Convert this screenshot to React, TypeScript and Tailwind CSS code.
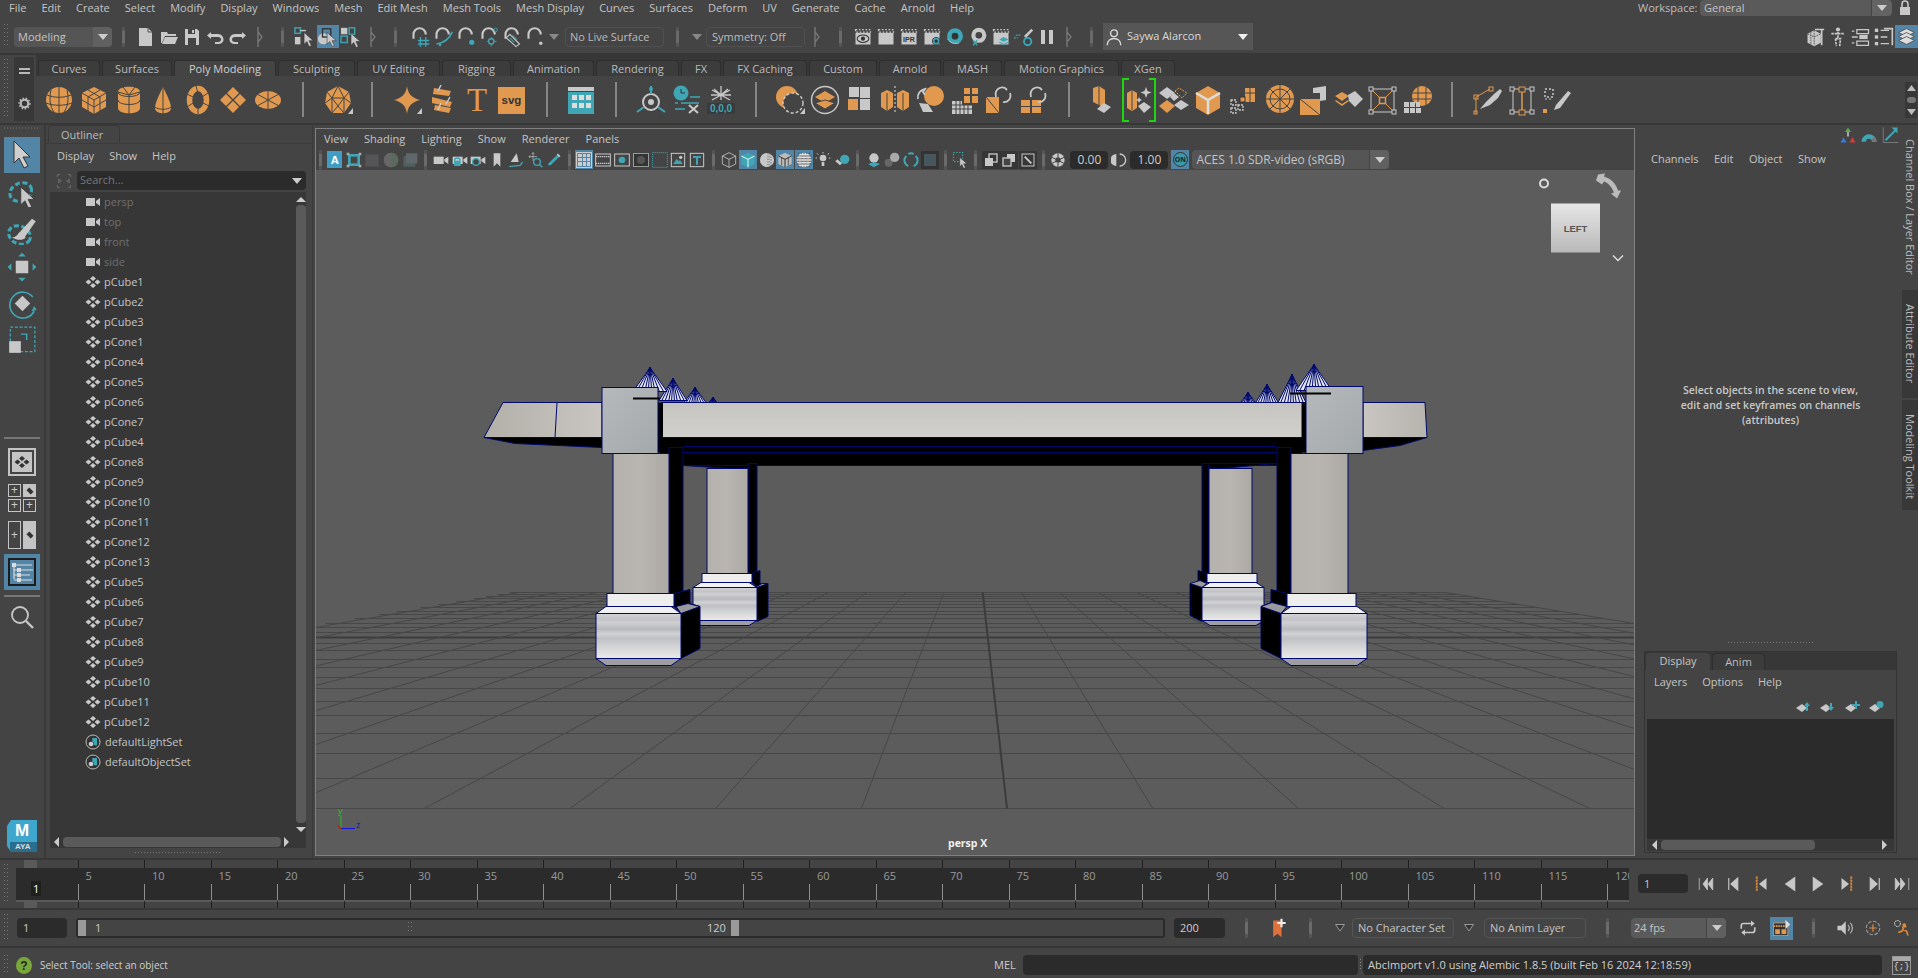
import React from "react";

const O = "#e0994f";
const G = "#c8c8c8";
const T = "#3fa6b6";
const N = "#00096b";

type P = { w?: number; h?: number; vb?: string; children?: React.ReactNode };
const Svg = ({ w = 20, h = 20, vb = "0 0 24 24", children }: P) => (
  <svg width={w} height={h} viewBox={vb} className="block shrink-0">
    {children}
  </svg>
);
const Cur = ({ x = 0, y = 0, s = 1, f = G }: { x?: number; y?: number; s?: number; f?: string }) => (
  <path transform={`translate(${x} ${y}) scale(${s})`} d="M0 0v13l3-3 2.6 5.5 2.4-1.1L5.4 9H10z" fill={f} stroke="#333" strokeWidth=".6" />
);

const Slot = ({ w, children }: { w: string; children?: React.ReactNode }) => (
  <div className={`${w} h-full flex items-center justify-center shrink-0`}>{children}</div>
);
const Step23 = ({ children }: { children?: React.ReactNode }) => <div className="w-[23px] h-full flex items-center justify-center shrink-0">{children}</div>;
const Step19 = ({ children }: { children?: React.ReactNode }) => <div className="w-[18.8px] h-full flex items-center justify-center shrink-0">{children}</div>;
const Bar = () => <div className="w-[3px] h-[20px] bg-[#6a6a6a] rounded-[1px] border-y-[4px] border-y-[#555]" />;
const Fold = () => (
  <svg width="6" height="20" viewBox="0 0 6 20" className="block">
    <path d="M1 0v20M1 5l4 5-4 5" fill="none" stroke="#777" strokeWidth="1.4" />
  </svg>
);
const Dots = ({ h = 26 }: { h?: number }) => (
  <svg width="5" height={h} className="block shrink-0">
    {Array.from({ length: Math.floor(h / 4) }).map((_, i) => (
      <g key={i}>
        <rect x="0" y={i * 4} width="1" height="1" fill="#777" />
        <rect x="3" y={i * 4} width="1" height="1" fill="#777" />
      </g>
    ))}
  </svg>
);
const TriDown = ({ c = "#ccc", s = 8 }: { c?: string; s?: number }) => (
  <svg width={s + 2} height={s} viewBox="0 0 10 8" className="block">
    <path d="M0 1h10L5 7z" fill={c} />
  </svg>
);
const TriOut = () => (
  <svg width="10" height="8" viewBox="0 0 10 8" className="block">
    <path d="M.5.5h9L5 7z" fill="#333" stroke="#999" />
  </svg>
);

/* ---------- status line icons ---------- */
const statusA = [
  <Svg w={15} h={20} vb="0 0 15 20"><path d="M1 1h9l4 4v14H1z" fill={G} /><path d="M10 1v4h4" fill="none" stroke="#555" /></Svg>,
  <Svg w={18} h={16} vb="0 0 18 16"><path d="M1 3h6l1 2h8v2H5L2 14H1z" fill={G} /><path d="M5 8h13l-3 7H2z" fill={G} /></Svg>,
  <Svg w={16} h={18} vb="0 0 16 18"><path d="M1 1h12l2 2v14H1z" fill={G} /><path d="M4 1h7v5H4zM4 10h8v7H4z" fill="#444" /><rect x="8" y="2" width="2" height="3" fill={G} /></Svg>,
  <Svg w={18} h={14} vb="0 0 18 14"><path d="M5 2 1 5.5 5 9V7h7c2 0 3 1 3 2.5S14 12 12 12H9v2h3c3.5 0 5.5-2 5.5-4.5S15.500 4 12 4H5z" fill={G} /></Svg>,
  <Svg w={18} h={14} vb="0 0 18 14"><path d="M13 2l4 3.500L13 9V7H6c-2 0-3 1-3 2.500S4 12 6 12h3v2H6C2.500 14 .5 12 .5 9.500S2.500 4 6 4h7z" fill={G} /></Svg>,
];
const selHier = (
  <Svg w={22} h={22}><rect x="1" y="2" width="6" height="6" fill="none" stroke={T} strokeWidth="1.5" /><rect x="1" y="12" width="6" height="8" fill={G} /><path d="M7 5h6" stroke={G} strokeWidth="1.5" /><Cur x={11} y={7} s={1} /></Svg>
);
const selObj = (
  <Svg w={22} h={22}><circle cx="7" cy="14" r="6" fill={G} /><rect x="6" y="3" width="9" height="9" fill="none" stroke="#333" strokeWidth="1.500" /><Cur x={11} y={7} /></Svg>
);
const selComp = (
  <Svg w={22} h={22}><rect x="1" y="2" width="7" height="7" fill={G} /><rect x="10" y="2" width="6" height="7" fill="none" stroke={T} strokeWidth="1.5" /><rect x="1" y="11" width="7" height="7" fill="none" stroke={T} strokeWidth="1.5" /><Cur x={12} y={8} /></Svg>
);
const Magnet = ({ children }: { children?: React.ReactNode }) => (
  <Svg w={21} h={22}>
    <path d="M4 14V9a7 7 0 0 1 14 0" fill="none" stroke={G} strokeWidth="2.400" />
    {children}
  </Svg>
);
const snaps = [
  <Magnet><path d="M9 16h13M9 20h13M12 12v11M18 12v11" stroke={T} strokeWidth="1.5" /></Magnet>,
  <Magnet><path d="M4 20c6-1 14-3 18-14" fill="none" stroke={T} strokeWidth="2" /><circle cx="8" cy="21" r="1.500" fill={T} /></Magnet>,
  <Magnet><circle cx="18" cy="18" r="3" fill={T} /></Magnet>,
  <Magnet><circle cx="19" cy="4" r="2" fill="none" stroke={T} /><circle cx="14" cy="17" r="3" fill="none" stroke={T} strokeWidth="1.5" /><path d="M14 12v2M14 20v3M9 17h2M17 17h3" stroke={T} /></Magnet>,
  <Magnet><path d="M9 9l11 11-4 3L5 13z" fill="none" stroke={G} strokeWidth="1.300" /><path d="M9 13l5 5M12 10l5 5" stroke={T} strokeWidth="1.200" /></Magnet>,
  <Magnet><circle cx="18" cy="19" r="2" fill={G} /></Magnet>,
];
const Clap = ({ children }: { children?: React.ReactNode }) => (
  <Svg w={20} h={22}>
    <path d="M3 3h18v3H3z" fill="none" stroke={G} strokeDasharray="2 2" strokeWidth="1.500" />
    <rect x="3" y="7" width="18" height="14" fill={G} />
    {children}
  </Svg>
);
const renders = [
  <Clap><ellipse cx="12" cy="14" rx="7" ry="4.500" fill="none" stroke="#333" strokeWidth="1.300" /><circle cx="12" cy="14" r="2.500" fill="#333" /></Clap>,
  <Clap />,
  <Clap><text x="12" y="18" fontSize="8.500" fontWeight="700" textAnchor="middle" fontFamily="Liberation Sans, sans-serif" fill="#333">IPR</text></Clap>,
  <Clap><circle cx="17" cy="17" r="5" fill="#333" /><circle cx="17" cy="17" r="3" fill="none" stroke={T} strokeWidth="2" /></Clap>,
  <Svg w={20} h={22}><circle cx="12" cy="11" r="9.500" fill={T} /><circle cx="12" cy="11" r="4" fill="#333" /><path d="M3 14c3 5 9 7 14 5" stroke={G} fill="none" /></Svg>,
  <Svg w={20} h={22}><circle cx="13" cy="10" r="9" fill={G} /><circle cx="13" cy="10" r="4" fill="#444" /><path d="M6 16l5 6M11 16l-5 6" stroke={T} strokeWidth="1.800" /></Svg>,
  <Clap><path d="M10 15l5-3 6 3-6 3z" fill={T} /><path d="M10 18l5 3 6-3" fill="none" stroke={T} strokeWidth="1.500" /></Clap>,
  <Svg w={22} h={22}><path d="M12 11 20 3l2 2-8 8z" fill={G} /><path d="M3 10h6M1 13h4" stroke={T} strokeDasharray="2 1" strokeWidth="1.500" /><circle cx="16" cy="17" r="4" fill="none" stroke={T} strokeWidth="2" /></Svg>,
  <Svg w={16} h={18} vb="0 0 16 18"><rect x="2" y="2" width="4" height="14" fill={G} /><rect x="10" y="2" width="4" height="14" fill={G} /></Svg>,
];
const right = [
  <Svg w={20} h={22}><path d="M3 8l8-4 8 4v11l-8 4-8-4z" fill={G} /><path d="M11 4v18M3 8l8 4 8-4M7 6v16" stroke="#444" strokeDasharray="2 1" fill="none" /><path d="M12 3h11M20 3v19" stroke={G} strokeWidth="2" fill="none" /></Svg>,
  <Svg w={20} h={22}><circle cx="12" cy="3" r="2.500" fill={G} /><path d="M4 8h16M12 6v9M9 14h6l-1 9M9 14l1 9" stroke={G} strokeWidth="2" fill="none" strokeDasharray="3 1" /></Svg>,
  <Svg w={20} h={20}><path d="M7 3h14v5H7zM7 17h14v5H7z" fill="none" stroke={G} strokeWidth="1.500" /><path d="M1 5h3M1 12h7M1 19h3" stroke={G} strokeWidth="1.600" /><rect x="10" y="9.500" width="10" height="5" fill={G} /></Svg>,
  <Svg w={20} h={20}><rect x="1" y="2" width="4" height="4" fill={G} /><rect x="1" y="10" width="4" height="4" fill={G} /><rect x="1" y="18" width="4" height="4" fill={G} /><path d="M8 4h10M8 12h8M8 20h10" stroke={G} strokeWidth="1.600" /><path d="M12 2h10v20" stroke={G} strokeWidth="2" fill="none" /></Svg>,
];

/* ---------- shelf icons ---------- */
const L = "#444444";
const Sh = ({ children, vb = "0 0 30 30" }: { children?: React.ReactNode; vb?: string }) => (
  <svg width="30" height="30" viewBox={vb} className="block overflow-visible">{children}</svg>
);
const Corner = () => <path d="M25 29h5v-6z" fill={G} />;
const shelf: (React.ReactNode | null)[] = [
  <Sh><circle cx="15" cy="15" r="13" fill={O} /><path d="M3 10c7 3 17 3 24 0M2 18c8 3 18 3 26 0M15 2v26M7 5c-2 8-1 17 3 22M23 5c2 8 1 17-3 22" stroke={L} fill="none" /></Sh>,
  <Sh><path d="M15 2l12 6v14l-12 7-12-7V8z" fill={O} /><path d="M3 8l12 7 12-7M15 15v14M9 5l12 7M21 5 9 12M9 12v14M21 12v14M3 15l12 7 12-7" stroke={L} fill="none" /></Sh>,
  <Sh><path d="M4 7c0-7 22-7 22 0v16c0 7-22 7-22 0z" fill={O} /><path d="M4 7c0 6 22 6 22 0M4 15c0 6 22 6 22 0M15 10v19M9 2l6 8 6-8M4 7l11 3 11-3" stroke={L} fill="none" /></Sh>,
  <Sh><path d="M15 2c-4 8-8 16-8 21 0 7 16 7 16 0 0-5-4-13-8-21z" fill={O} /><path d="M15 2v27M7 22c3 3 13 3 16 0" stroke={L} fill="none" /></Sh>,
  <Sh><ellipse cx="15" cy="15" rx="8.500" ry="11.500" fill="none" stroke={O} strokeWidth="5.500" /><path d="M4 9l6 3M13 1l2 7M25 8l-6 4M26 21l-6-3M15 29v-6M4 22l6-4" stroke={L} /></Sh>,
  <Sh><path d="M15 2l13 13-13 13L2 15z" fill={O} /><path d="M8 8l14 14M22 8 8 22" stroke={L} strokeWidth="1.300" /></Sh>,
  <Sh><ellipse cx="15" cy="15" rx="13" ry="9" fill={O} /><path d="M15 15V6M15 15V24M15 15 4 9M15 15l11-6M15 15 4 21M15 15l11 6" stroke={L} /></Sh>,
  null,
  <Sh><path d="M15 1l11 6 2 11-7 10H9L2 18 4 7z" fill={O} /><path d="M15 1l-6 12h12zM4 7l5 6-7 5M26 7l-5 6 7 5M9 13l-0 15M21 13v15M9 28l6-7 6 7M9 13l6 8 6-8" fill="none" stroke={L} /><Corner /></Sh>,
  null,
  <Sh><path d="M15 1c1 8 5 12 13 14-8 2-12 6-13 14-1-8-5-12-13-14 8-2 12-6 13-14z" fill={O} /><Corner /></Sh>,
  <Sh><path d="M7 3 24 6l-2 5L6 9zM5 12l20 5-2 5L5 18zM8 20l16 3-2 5-15-3z" fill={O} /><path d="M14 0l-3 6M23 12l-4 7M14 18l-3 7" stroke={G} strokeWidth="1.500" /></Sh>,
  <Sh><text x="15" y="26" fontSize="33" fontFamily="Liberation Serif, serif" textAnchor="middle" fill={O}>T</text></Sh>,
  <Sh><rect x="1" y="2" width="27" height="27" fill={O} /><text x="14.500" y="19" fontSize="11.500" fontWeight="700" fontFamily="Liberation Sans, sans-serif" textAnchor="middle" fill="#333">svg</text></Sh>,
  null,
  <Sh><rect x="2" y="2" width="26" height="4" fill={G} /><rect x="2" y="7" width="26" height="22" fill={T} /><path d="M6 10h5v5H6zM13 10h5v5h-5zM20 10h5v5h-5zM6 18h5v5H6zM13 18h5v5h-5zM20 18h5v5h-5z" fill="#ddd" /></Sh>,
  null,
  <Sh><circle cx="15" cy="17" r="8" fill="none" stroke={G} strokeWidth="2" /><circle cx="15" cy="17" r="3" fill={G} /><path d="M15 1v8M1 27l7-5M29 27l-7-5" stroke={T} strokeWidth="2" /><circle cx="15" cy="4" r="2" fill={T} /></Sh>,
  <Sh><circle cx="10" cy="8" r="7.500" fill={T} /><path d="M10 4v4h4" stroke="#333" fill="none" /><path d="M19 12h10M4 18h3M10 18h18M4 24h10" stroke={T} strokeWidth="1.600" /><path d="M18 20l9 8M27 20l-9 8" stroke={G} strokeWidth="2" /></Sh>,
  <Sh><path d="M15 1v14M8 4l7 6 7-6M5 10h20M6 5l18 10M24 5 6 15" stroke={G} strokeWidth="1.300" fill="none" /><rect x="1" y="18" width="28" height="11" fill="#3a3a3a" /><text x="15" y="27" fontSize="10" fontWeight="700" fontFamily="Liberation Sans, sans-serif" textAnchor="middle" fill={T}>0,0,0</text></Sh>,
  null,
  <Sh><circle cx="12" cy="12" r="11" fill={O} /><circle cx="18" cy="18" r="10" fill={L} stroke="#ccc" strokeWidth="1.400" strokeDasharray="3 2" /><Corner /></Sh>,
  <Sh><circle cx="15" cy="15" r="13.500" fill="none" stroke={G} strokeWidth="1.400" /><path d="M5 12l10-6 10 6-10 6z" fill={O} /><path d="M5 18l10 6 10-6-10-3z" fill={O} stroke="#444" /></Sh>,
  <Sh><rect x="3" y="14" width="10" height="11" fill={O} /><rect x="15" y="2" width="10" height="11" fill={G} /><rect x="15" y="14" width="10" height="11" fill={G} /><rect x="4" y="2" width="10" height="10" fill={G} /></Sh>,
  <Sh><path d="M1 8l6-3 6 3v14l-6 4-6-4z" fill={O} /><path d="M17 8l6-3 6 3v14l-6 4-6-4z" fill={O} /><path d="M7 8v18M23 8v18" stroke={L} /><path d="M15 1v28" stroke="#ddd" strokeDasharray="2 2" /></Sh>,
  <Sh><circle cx="19" cy="11" r="10" fill={O} /><path d="M3 14c-1-5 2-9 7-10l-2 3 2 3" fill="none" stroke={G} strokeWidth="1.800" /><path d="M4 18l9 1 5 8H8z" fill={G} /></Sh>,
  <Sh><path d="M14 3h6v6h-6zM22 3h6v6h-6zM14 11h6v7h-6zM22 11h6v7h-6z" fill={O} /><path d="M2 16h10v13H2zM12 20h10v9H12z" fill={G} /><path d="M2 20h20M2 24h20M6 16v13M10 16v13M14 20v9M18 20v9" stroke={L} /></Sh>,
  <Sh><path d="M2 12l13 0v16H2zM15 4h9" fill={O} /><path d="M2 12l13 16" stroke={L} /><path d="M12 12c-2-8 5-11 9-9l2 2M26 8c2 6-3 10-7 9" fill="none" stroke={G} strokeWidth="1.800" /></Sh>,
  <Sh><path d="M2 15h9v6H2zM13 15h9v6h-9zM2 22h9v6H2zM13 22h9v6h-9z" fill={O} /><path d="M12 12c-2-8 5-11 9-9l2 2M26 8c2 6-3 10-7 9" fill="none" stroke={G} strokeWidth="1.800" /></Sh>,
  null,
  <Sh><path d="M4 3l6-2 6 4v18l-6-3-6-3z" fill={O} /><path d="M10 1v19" stroke={L} /><path d="M8 24l7-6 7 4-7 6z" fill={G} /></Sh>,
  <div className="w-[34px] h-[44px] border-x-2 border-[#21d411] relative flex items-center justify-center">
    <div className="absolute left-0 top-0 w-[5px] h-[2px] bg-[#21d411]" />
    <div className="absolute right-0 top-0 w-[5px] h-[2px] bg-[#21d411]" />
    <div className="absolute left-0 bottom-0 w-[5px] h-[2px] bg-[#21d411]" />
    <div className="absolute right-0 bottom-0 w-[5px] h-[2px] bg-[#21d411]" />
    <Sh><path d="M3 8l5-3 5 3v15l-5 3-5-3z" fill={O} /><path d="M8 5v20" stroke={L} /><path d="M14 21l6-4 7 5-7 6z" fill={G} /><path d="M22 2l1.500 4 4 1.500-4 1.500-1.500 4-1.500-4-4-1.500 4-1.500zM15 12l1 2 2 1-2 1-1 2-1-2-2-1 2-1z" fill={G} /></Sh>
  </div>,
  <Sh><path d="M8 2l8 6-8 6L0 8z" fill={G} /><path d="M16 6l4-3 8 5-5 5z" fill="none" stroke={O} strokeDasharray="2 1" /><path d="M15 8l5 4-5 4-4-4zM22 15l8 5-8 5-7-5z" fill={G} /><path d="M8 15l8 6-8 7-8-7z" fill={O} /></Sh>,
  <Sh><path d="M15 1l12 7v15l-12 7-12-7V8z" fill={O} /><path d="M3 8l12 7 12-7M15 15v14" stroke="#ddd" strokeWidth="2.500" fill="none" /></Sh>,
  <Sh><path d="M12 12h5V3h10v14H12z" fill={O} /><path d="M17 8h10M22 3v14" stroke="#444" /><path d="M3 15h5v5H3zM10 20h5v5h-5zM3 23h5v5H3z" fill="none" stroke={G} strokeWidth="1.300" strokeDasharray="2 1" /><rect x="12" y="12" width="5" height="5" fill="none" stroke="#333" /></Sh>,
  <Sh><circle cx="17" cy="14" r="14" fill={O} /><circle cx="17" cy="14" r="10" fill="none" stroke={L} /><path d="M3 14h28M17 0v28M7 4l20 20M27 4 7 24" stroke={L} /></Sh>,
  <Sh><path d="M2 14h20v16H2z" fill={O} /><path d="M2 14l20 16" stroke={L} /><path d="M15 3l13-2v14l-6 1V8h-7z" fill={G} /></Sh>,
  <Sh><path d="M2 11l7-4 7 4-7 5z" fill={O} /><path d="M2 16l7 5 7-5-1-1-6 4-6-4z" fill={O} /><path d="M15 10l7-4 8 8-8 8-6-6z" fill={G} /></Sh>,
  <Sh><rect x="4" y="4" width="23" height="23" fill="none" stroke={G} /><path d="M4 4l9 9M27 4l-9 9M4 27l9-9M27 27l-9-9" stroke={O} /><rect x="12.500" y="12.500" width="6" height="6" fill="none" stroke={O} strokeWidth="1.500" /><rect x="2" y="2" width="4" height="4" fill="#444" stroke={G} /><rect x="25" y="2" width="4" height="4" fill="#444" stroke={G} /><rect x="2" y="25" width="4" height="4" fill="#444" stroke={G} /><rect x="25" y="25" width="4" height="4" fill="#444" stroke={G} /></Sh>,
  <Sh><circle cx="20" cy="11" r="10" fill={O} /><path d="M11 8h18M11 14h18M16 2v19M24 2v19" stroke={L} /><path d="M2 17h5v5H2zM8 17h5v5H8zM2 23h5v5H2zM8 23h5v5H8zM14 23h5v5h-5zM14 17h4v5h-4z" fill={G} /></Sh>,
  null,
  <Sh><path d="M4 12l14-8" stroke={O} /><path d="M4 12v16" stroke={O} /><rect x="2" y="10" width="4" height="4" fill="none" stroke={O} /><rect x="17" y="2" width="4" height="4" fill="none" stroke={O} /><rect x="2" y="26" width="3" height="3" fill="none" stroke={O} /><path d="M8 24l6-7 8-8 6-5 2 2-4 7-8 7z" fill={G} /></Sh>,
  <Sh><path d="M6 4v24M24 4v24" stroke={G} /><path d="M15 4v24" stroke={O} strokeWidth="1.500" /><path d="M6 4h18M6 27h18" stroke={G} /><rect x="12" y="2" width="6" height="5" fill="#444" stroke={O} /><rect x="12" y="25" width="6" height="5" fill="#444" stroke={O} /><rect x="3" y="2" width="4" height="4" fill="#444" stroke={G} /><rect x="23" y="2" width="4" height="4" fill="#444" stroke={G} /><rect x="3" y="25" width="4" height="4" fill="#444" stroke={G} /><rect x="23" y="25" width="4" height="4" fill="#444" stroke={G} /></Sh>,
  <Sh><path d="M3 4h8v8H3z" fill="none" stroke={G} strokeDasharray="2 2" strokeWidth="1.500" /><path d="M3 14h8" stroke={G} strokeDasharray="2 2" /><rect x="1" y="24" width="4" height="4" fill={O} /><path d="M12 25l2-5 12-14 3 2-11 15z" fill={G} /></Sh>,
];
const shelfTabs = [
  ["Curves", "w-[62px]"], ["Surfaces", "w-[70px]"], ["Poly Modeling", "w-[102px]"], ["Sculpting", "w-[77px]"], ["UV Editing", "w-[83px]"],
  ["Rigging", "w-[69px]"], ["Animation", "w-[81px]"], ["Rendering", "w-[83px]"], ["FX", "w-[40px]"], ["FX Caching", "w-[84px]"],
  ["Custom", "w-[68px]"], ["Arnold", "w-[62px]"], ["MASH", "w-[59px]"], ["Motion Graphics", "w-[115px]"], ["XGen", "w-[54px]"],
];

/* ---------- viewport toolbar ---------- */
const Vi = ({ active, children }: { active?: boolean; children?: React.ReactNode }) => (
  <div className="w-[18.8px] h-full flex items-center justify-center shrink-0">
    <div className={`w-[18px] h-[19px] flex items-center justify-center ${active ? "bg-[#5285a6]" : ""}`}>{children}</div>
  </div>
);
const v = (c: React.ReactNode) => <Svg w={16} h={16}>{c}</Svg>;
const vbA = [
  <div className="w-[15px] h-[17px] bg-[#3f9ec4] text-[11px] font-bold text-white leading-[17px] text-center">A</div>,
  v(<><rect x="3" y="3" width="18" height="18" fill={T} /><rect x="7" y="7" width="10" height="10" fill="#444" /><path d="M1 1h4v4H1zM19 1h4v4h-4zM1 19h4v4H1zM19 19h4v4h-4z" fill="#aaa" /></>),
  v(<rect x="2" y="4" width="20" height="18" fill="#555" stroke="#4c4f58" />),
  v(<><circle cx="12" cy="12" r="11" fill="#666" /><path d="M12 1a11 11 0 0 1 0 22z" fill="#5a6a5c" /></>),
  v(<><rect x="2" y="6" width="18" height="16" fill="#4e5f60" /><rect x="6" y="2" width="17" height="15" fill="#60676a" /></>),
];
const Cam = ({ children }: { children?: React.ReactNode }) => v(<><rect x="1" y="7" width="15" height="11" fill={G} /><path d="M17 11l6-4v11l-6-4z" fill={G} />{children}</>);
const vbB = [
  <Cam />,
  <Cam><path d="M4 13a4 4 0 0 1 8 0" fill="none" stroke={T} strokeWidth="2" /><rect x="3" y="13" width="10" height="8" fill={T} /></Cam>,
  <Cam><circle cx="9" cy="15" r="5" fill="#444" stroke={T} strokeWidth="2" /></Cam>,
  v(<path d="M7 2h10v20l-5-5-5 5z" fill={G} />),
  v(<><path d="M13 2l3 13H4z" fill={G} /><path d="M2 22l16-2 4-5" stroke={T} strokeWidth="2" fill="none" /></>),
  v(<><circle cx="15" cy="15" r="5" fill="none" stroke={T} strokeWidth="2" /><path d="M19 19l4 4" stroke={T} strokeWidth="2" /><path d="M9 1v12M3 7h12M9 1l-2 2M9 1l2 2M3 7l2-2M3 7l2 2" stroke={G} fill="none" /></>),
  v(<><path d="M4 17 18 3l3 3L7 20H3z" fill={T} /><path d="M17 3l4 4" stroke={G} strokeWidth="2" /></>),
];
const vbC = [
  <div className="w-[16px] h-[16px] grid grid-cols-3 gap-[1px] p-[1px] border border-[#ccc]">{Array.from({ length: 9 }).map((_, i) => <div key={i} className="bg-[#ccc]" />)}</div>,
  v(<><rect x="1" y="3" width="22" height="18" fill="none" stroke={G} strokeWidth="1.500" /><path d="M1 7h22M1 17h22" stroke={G} strokeDasharray="2 1" strokeWidth="2" /></>),
  v(<><rect x="1" y="3" width="22" height="18" fill="none" stroke={G} strokeWidth="1.500" /><circle cx="12" cy="12" r="5" fill={T} /></>),
  v(<><rect x="1" y="2" width="22" height="20" fill="#333" stroke={G} /><circle cx="12" cy="12" r="6" fill="#555" /></>),
  v(<rect x="1" y="1" width="22" height="22" fill="#444" stroke={T} strokeDasharray="2 1" strokeWidth="1.200" />),
  v(<><rect x="2" y="2" width="20" height="20" fill="none" stroke={G} strokeWidth="1.500" /><path d="M5 18l5-8 3 4 2-2 4 6z" fill={T} /><circle cx="16" cy="8" r="2.500" fill={G} /></>),
  v(<><rect x="2" y="2" width="20" height="20" fill="none" stroke={G} strokeWidth="1.500" /><path d="M6 6h12v3h-4.500v10h-3V9H6z" fill={T} /></>),
];
const vbD = [
  v(<path d="M12 1 22 6v12l-10 5L2 18V6zM2 6l10 5 10-5M12 11v12" fill="none" stroke={G} strokeWidth="1.200" />),
  v(<><path d="M12 1 22 6v12l-10 5L2 18V6z" fill={T} /><path d="M2 6l10 5 10-5M12 11v12" fill="none" stroke="#dff" strokeWidth="1.500" /></>),
  v(<><circle cx="12" cy="12" r="10.500" fill={G} /><path d="M12 2v20M15 2v20M18 3v18" stroke="#444" strokeDasharray="2 2" /><path d="M2 12a10 10 0 0 1 10-10v20A10 10 0 0 1 2 12z" fill={G} /></>),
  v(<><path d="M12 1 22 6v12l-10 5L2 18V6z" fill="#bbb" /><path d="M2 6l10 5 10-5M12 11v12" fill="none" stroke="#333" strokeWidth="1.500" /><path d="M7 8v12M17 8v12" stroke="#333" /></>),
  v(<><circle cx="12" cy="12" r="11" fill="#ddd" /><path d="M1 6h22M1 10h22M1 14h22M1 18h22M4 1v22M8 1v22M12 1v22M16 1v22M20 1v22" stroke="#333" strokeDasharray="2 2" /></>),
  v(<><circle cx="12" cy="9" r="5" fill={G} /><rect x="10" y="15" width="4" height="6" fill={G} /><path d="M12 0v2M3 2l2 2M21 2l-2 2M1 9h2M21 9h2" stroke={G} strokeWidth="1.500" /></>),
  v(<><circle cx="16" cy="11" r="7" fill={T} /><path d="M2 14l7 6 3-3-7-6z" fill={G} /></>),
];
const vbE = [
  v(<><circle cx="12" cy="9" r="7" fill={G} /><path d="M3 18l9-3 9 3-9 5z" fill={T} /></>),
  v(<><circle cx="7" cy="16" r="6" fill="#666" /><circle cx="16" cy="8" r="7" fill="#aaa" /></>),
  v(<path d="M5 6a9 9 0 0 0 3 15M19 6a9 9 0 0 1-3 15M8 3a9 9 0 0 1 8 0" fill="none" stroke={T} strokeWidth="3" />),
  <div className="w-[18px] h-[18px] bg-[#333] flex items-center justify-center"><div className="w-[12px] h-[12px] bg-[#47585c]" /></div>,
];
const vbF = (
  <Svg w={17} h={17}><rect x="2" y="2" width="13" height="13" fill="none" stroke={T} strokeDasharray="2 2" strokeWidth="1.500" /><Cur x={11} y={9} /></Svg>
);
const Box3 = ({ children }: { children?: React.ReactNode }) => <div className="w-[18px] h-[18px] bg-[#363636] flex items-center justify-center">{children}</div>;
const vbG = [
  <Box3>{v(<><rect x="9" y="3" width="12" height="12" fill="none" stroke={G} strokeWidth="2" /><rect x="3" y="9" width="12" height="12" fill={G} /></>)}</Box3>,
  <Box3>{v(<><rect x="9" y="3" width="12" height="12" fill={G} /><rect x="3" y="9" width="12" height="12" fill="#444" stroke={G} strokeWidth="2" /></>)}</Box3>,
  <Box3>{v(<><rect x="3" y="3" width="18" height="18" fill="none" stroke={G} strokeWidth="1.500" /><path d="M7 7l10 10" stroke={G} strokeWidth="3" /></>)}</Box3>,
];

const outlinerNames = ["pCube1","pCube2","pCube3","pCone1","pCone4","pCone5","pCone6","pCone7","pCube4","pCone8","pCone9","pCone10","pCone11","pCone12","pCone13","pCube5","pCube6","pCube7","pCube8","pCube9","pCube10","pCube11","pCube12"];
const Diam = ({ c = G }: { c?: string }) => (
  <svg width="16" height="12" viewBox="0 0 16 12" className="block shrink-0">
    <path d="M8 0l3 2.500L8 5 5 2.500zM3.500 3.500 6.500 6 3.500 8.500.5 6zM12.500 3.500l3 2.500-3 2.500-3-2.500zM8 7l3 2.500L8 12 5 9.500z" fill={c} />
  </svg>
);

/* ---------- scene ---------- */
const VX = 974, VY = 514;
const hy = [592,594,596,598,601,604,607,611,614,618,623,627,632,643,650,659,667,677,688,701,715,733,753,778,808];
const Grid = () => (
  <g>
    {hy.map((y) => {
      const t = (y - VY) / 294;
      return <line key={y} x1={VX - 1750 * t} x2={VX + 1781 * t} y1={y} y2={y} stroke="#474747" />;
    })}
    <line x1={VX - 1750 * 0.418} x2={VX + 1781 * 0.418} y1={637} y2={637} stroke="#3c3c3c" strokeWidth="2" />
    {Array.from({ length: 25 }).map((_, i) => {
      const k = i - 12;
      const xn = 1007 + 145.7 * k;
      const xf = VX + (xn - VX) * 0.265;
      return <line key={k} x1={xn} y1={808} x2={xf} y2={592} stroke={k === 0 ? "#3c3c3c" : "#474747"} strokeWidth={k === 0 ? 2 : 1} />;
    })}
  </g>
);
const Cone = ({ x, y, r, h }: { x: number; y: number; r: number; h: number }) => (
  <g>
    <path d={`M${x} ${y}L${x + r} ${y + h}L${x - r} ${y + h}Z`} fill="#e2e5f0" stroke={N} />
    {[-0.8, -0.55, -0.3, -0.1, 0.1, 0.3, 0.55, 0.8].map((q) => (
      <line key={q} x1={x} y1={y} x2={x + q * r} y2={y + h} stroke={N} />
    ))}
  </g>
);
const Base = ({ f, x1, x2, y1, y2, side, top, px1, px2, py1, py2, fill }: {
  f: boolean; x1: number; x2: number; y1: number; y2: number; side: string; top: string; px1: number; px2: number; py1: number; py2: number; fill: string;
}) => {
  const c = f ? 7 : 5;
  return (
    <g stroke={N}>
      <path d={side} fill="#000" />
      <path d={top} fill="#9a9a9c" />
      <rect x={px1} y={py1} width={px2 - px1} height={py2 - py1} fill="#eeeeee" />
      <path d={`M${x1} ${y1}L${x1 + c + 3} ${y1 - c}L${x2 - c - 3} ${y1 - c}L${x2} ${y1}Z`} fill="#f1f1f3" />
      <path d={`M${x1} ${y2}L${x1 + c + 3} ${y2 + c}L${x2 - c - 3} ${y2 + c}L${x2} ${y2}Z`} fill="#9d9da2" />
      <rect x={x1} y={y1} width={x2 - x1} height={y2 - y1} fill={fill} />
    </g>
  );
};
const Scene = () => (
  <svg viewBox="316 170 1318 684" className="absolute inset-0 w-full h-full">
    <defs>
      <linearGradient id="beam" x1="0" x2="0" y1="0" y2="1"><stop offset="0" stopColor="#c6c4c0" /><stop offset="1" stopColor="#d2d0cc" /></linearGradient>
      <linearGradient id="ov" x1="0" x2="1" y1="0" y2="0"><stop offset="0" stopColor="#b3afa9" /><stop offset="1" stopColor="#c9c6c1" /></linearGradient>
      <linearGradient id="ov2" x1="0" x2="1" y1="0" y2="0"><stop offset="0" stopColor="#c9c6c1" /><stop offset="1" stopColor="#b7b3ad" /></linearGradient>
      <linearGradient id="blk" x1="0" x2="1" y1="0" y2="1"><stop offset="0" stopColor="#b5b9bb" /><stop offset="1" stopColor="#a4a9ab" /></linearGradient>
      <linearGradient id="col" x1="0" x2="1" y1="0" y2="0"><stop offset="0" stopColor="#b5b1ac" /><stop offset=".5" stopColor="#b9b5b0" /><stop offset="1" stopColor="#aca8a3" /></linearGradient>
      <linearGradient id="stripe" x1="0" x2="0" y1="0" y2="1">
        <stop offset="0" stopColor="#d5d5d9" /><stop offset=".12" stopColor="#c2c3c7" /><stop offset=".2" stopColor="#d0d0d4" /><stop offset=".35" stopColor="#b7b9bd" /><stop offset=".45" stopColor="#d2d2d5" /><stop offset=".55" stopColor="#bfc0c4" /><stop offset=".7" stopColor="#d0d0d3" /><stop offset=".85" stopColor="#dededf" /><stop offset="1" stopColor="#e9e9ea" />
      </linearGradient>
      <linearGradient id="cubef" x1="0" x2="0" y1="0" y2="1"><stop offset="0" stopColor="#e6e6e6" /><stop offset="1" stopColor="#b9b9b9" /></linearGradient>
    </defs>
    <Grid />
    {/* cones */}
    <Cone x={713} y={397} r={5} h={6} />
    <Cone x={695} y={387} r={11} h={15} />
    <Cone x={673} y={378} r={14} h={22} />
    <Cone x={650} y={367} r={17} h={24} />
    <Cone x={1248} y={392} r={8} h={11} />
    <Cone x={1267} y={384} r={12} h={19} />
    <Cone x={1292} y={374} r={14} h={28} />
    <Cone x={1314} y={364} r={18} h={26} />
    {/* dark under-structure */}
    <path d="M660 437H1302V453H1277V465H683V453H660Z" fill="#000" />
    <path d="M683 446H1277M683 452H1277M683 465H1277" stroke={N} fill="none" />
    <path d="M683 465 747 469 756 463V465ZM1202 463 1209 469 1277 463Z" fill="#000" stroke={N} />
    <path d="M484 437 515 443 602 447V437Z" fill="#000" stroke={N} />
    <path d="M1363 437H1427L1400 445 1363 450Z" fill="#000" stroke={N} />
    {/* rear columns */}
    <rect x="748" y="463" width="9" height="110" fill="#000" stroke={N} />
    <rect x="707" y="468" width="41" height="105" fill="url(#col)" stroke={N} />
    <rect x="1202" y="463" width="7" height="110" fill="#000" stroke={N} />
    <rect x="1209" y="468" width="43" height="105" fill="url(#col)" stroke={N} />
    {/* rear bases */}
    <Base f={false} x1={693} x2={757} y1={587} y2={620} side="M752 573 760 570 760 583 768 583 768 616 757 621V587L752 582Z" top="M755 587 762 583 768 583 757 587Z" px1={702} px2={752} py1={573} py2={582} fill="url(#stripe)" />
    <Base f={false} x1={1202} x2={1264} y1={587} y2={620} side="M1207 573 1198 570V583L1190 583V615L1202 621V587L1207 582Z" top="M1190 583 1200 580 1207 583 1202 587Z" px1={1207} px2={1257} py1={573} py2={582} fill="url(#stripe)" />
    {/* front columns */}
    <rect x="669" y="447" width="14" height="146" fill="#000" stroke={N} />
    <rect x="613" y="453" width="56" height="140" fill="url(#col)" stroke={N} />
    <rect x="1277" y="447" width="14" height="146" fill="#000" stroke={N} />
    <rect x="1291" y="453" width="57" height="140" fill="url(#col)" stroke={N} />
    {/* beam */}
    <rect x="662" y="402" width="640" height="35" fill="url(#beam)" stroke={N} />
    <path d="M503 402H602V437H484Z" fill="url(#ov)" stroke={N} />
    <path d="M557 402 555 437" stroke={N} />
    <path d="M1363 402H1425L1427 437H1363Z" fill="url(#ov2)" stroke={N} />
    <rect x="658" y="402" width="5" height="50" fill="#000" />
    <rect x="1302" y="402" width="5" height="50" fill="#000" />
    <rect x="602" y="387" width="56" height="66" fill="url(#blk)" stroke={N} />
    <rect x="1306" y="386" width="57" height="67" fill="url(#blk)" stroke={N} />
    <path d="M633 397H660V399H633ZM1290 392H1331V394H1290Z" fill="#000" />
    {/* front bases */}
    <Base f={true} x1={596} x2={681} y1={613} y2={658} side="M674 593 690 589 690 603 700 606V648L681 658V613L674 606Z" top="M676 606 688 603 700 606 681 613Z" px1={607} px2={674} py1={593} py2={606} fill="url(#stripe)" />
    <Base f={true} x1={1281} x2={1367} y1={613} y2={658} side="M1287 593 1271 589V602L1261 606V648L1281 658V613L1287 606Z" top="M1261 606 1272 602 1287 606 1281 613Z" px1={1287} px2={1356} py1={593} py2={606} fill="url(#stripe)" />
    {/* axis */}
    <path d="M341 815V828" stroke="#22c41a" />
    <path d="M341 828H355" stroke="#1414e0" />
    <path d="M338 825l3 3" stroke="#d01414" strokeWidth="1.500" />
    <text x="338" y="813" fontSize="9" fill="#22c41a" fontFamily="Liberation Sans, sans-serif">y</text>
    <text x="356" y="827" fontSize="9" fill="#1414e0" fontFamily="Liberation Sans, sans-serif">z</text>
    <text x="948" y="846" fontSize="10.500" fontWeight="700" fill="#f0f0f0" fontFamily="Open Sans, sans-serif">persp X</text>
    {/* view cube */}
    <circle cx="1544" cy="183" r="4" fill="none" stroke="#ddd" strokeWidth="2" />
    <path d="M1598 174l-2 6 6 4 2-3c5 2 8 6 10 11l-3 1 6 5 4-8-3 0c-2-7-7-12-14-14l1-3z" fill="#bbb" />
    <path d="M1613 255l5 5 5-5" fill="none" stroke="#ddd" strokeWidth="1.500" />
    <rect x="1551" y="203" width="49" height="49" fill="url(#cubef)" />
    <text x="1575.500" y="231" fontSize="9.500" fontWeight="700" fill="#555" textAnchor="middle" fontFamily="Liberation Sans, sans-serif">LEFT</text>
  </svg>
);

const menus = ["File","Edit","Create","Select","Modify","Display","Windows","Mesh","Edit Mesh","Mesh Tools","Mesh Display","Curves","Surfaces","Deform","UV","Generate","Cache","Arnold","Help"];

const labels = [5,10,15,20,25,30,35,40,45,50,55,60,65,70,75,80,85,90,95,100,105,110,115,120];
const Cell = ({ n }: { n: number }) => (
  <div className="w-[66.5px] shrink-0 flex flex-col h-[48px]">
    <div className="h-[8px] border-l border-[#1f1f1f]" />
    <div className="h-[16px] bg-[#2b2b2b] pl-[8px] text-[11px] leading-[16px] text-[#9a9a9a]">{n}</div>
    <div className="h-[16px] bg-[#2b2b2b] border-l border-[#8e8e8e]" />
    <div className="h-[8px] border-l border-[#1f1f1f] border-t-2 border-t-[#5a5a5a]" />
  </div>
);

const Play = ({ children }: { children?: React.ReactNode }) => (
  <div className="w-[28px] flex justify-center shrink-0"><Svg w={18} h={18}>{children}</Svg></div>
);

export default function App() {
  return (
    <div className="w-[1918px] h-[978px] overflow-hidden bg-[#444444] text-[#cccccc] text-[11px] flex flex-col font-['Open_Sans',sans-serif]">
      {/* menu */}
      <div className="h-[20px] flex items-start shrink-0">
        <div className="flex gap-[15px] pl-[9px] leading-[16px] text-[#c4c4c4]">
          {menus.map((m) => <span key={m}>{m}</span>)}
        </div>
        <div className="ml-auto flex items-start">
          <span className="w-[62px] leading-[16px] text-[#bdbdbd]">Workspace:</span>
          <div className="w-[171px] h-[16px] bg-[#5a5a5a] rounded-l-sm pl-[4px] leading-[16px] text-[#c4c4c4]">General</div>
          <div className="w-[20px] h-[16px] bg-[#636363] ml-[1px] rounded-r-sm flex items-center justify-center"><TriDown /></div>
          <div className="w-[26px] flex justify-center"><Svg w={12} h={15} vb="0 0 12 15"><path d="M3 7V4a3 3 0 0 1 6 0v3" fill="none" stroke={G} strokeWidth="1.600" /><rect x="1" y="7" width="10" height="8" fill={G} /></Svg></div>
        </div>
      </div>

      {/* status line */}
      <div className="h-[33px] flex items-center shrink-0 text-[#bbb]">
        <div className="w-[14px] pl-[4px]"><Dots /></div>
        <div className="w-[98px] h-[20px] flex">
          <div className="flex-1 bg-[#555555] rounded-l-sm pl-[4px] leading-[20px] text-[#c4c4c4]">Modeling</div>
          <div className="w-[19px] bg-[#606060] rounded-r-sm flex items-center justify-center"><TriDown /></div>
        </div>
        <Slot w="w-[22px]"><Bar /></Slot>
        {statusA.map((s, i) => <Step23 key={i}>{s}</Step23>)}
        <Slot w="w-[22px]"><Fold /></Slot>
        <Slot w="w-[22px]"><Bar /></Slot>
        <Step23>{selHier}</Step23>
        <Step23><div className="w-[22px] h-[23px] bg-[#5285a6] flex items-center justify-center">{selObj}</div></Step23>
        <Step23>{selComp}</Step23>
        <Slot w="w-[22px]"><Fold /></Slot>
        <Slot w="w-[22px]"><Bar /></Slot>
        <div className="w-[3px]" />
        {snaps.map((s, i) => <Step23 key={i}>{s}</Step23>)}
        <Slot w="w-[14px]"><TriDown c="#888" /></Slot>
        <div className="ml-[4px] w-[99px] h-[20px] border border-[#505050] rounded-sm pl-[4px] leading-[18px]">No Live Surface</div>
        <Slot w="w-[26px]"><Bar /></Slot>
        <Slot w="w-[14px]"><TriDown c="#888" /></Slot>
        <div className="ml-[2px] w-[99px] h-[20px] border border-[#505050] rounded-sm pl-[5px] leading-[18px]">Symmetry: Off</div>
        <Slot w="w-[24px]"><Fold /></Slot>
        <Slot w="w-[22px]"><Bar /></Slot>
        {renders.map((s, i) => <Step23 key={i}>{s}</Step23>)}
        <Slot w="w-[22px]"><Fold /></Slot>
        <Slot w="w-[23px]"><Bar /></Slot>
        <div className="w-[150px] h-[27px] bg-[#565656] flex items-center pl-[2px]">
          <Svg w={18} h={18}><circle cx="12" cy="7" r="4.500" fill="none" stroke="#ddd" strokeWidth="1.800" /><path d="M3 23c0-6 4-9 9-9s9 3 9 9" fill="none" stroke="#ddd" strokeWidth="1.800" /></Svg>
          <span className="ml-[4px] text-[#d8d8d8]">Saywa Alarcon</span>
          <div className="ml-auto mr-[5px]"><TriDown c="#eee" /></div>
        </div>
        <div className="ml-auto flex h-full items-center">
          {right.map((s, i) => <Step23 key={i}>{s}</Step23>)}
          <div className="w-[23px] h-[23px] bg-[#5285a6] flex items-center justify-center">
            <Svg w={19} h={19}><path d="M12 2l10 5-10 5L2 7z" fill="#ddd" stroke="#444" /><path d="M12 7l10 5-10 5-10-5z" fill="#ddd" stroke="#444" /><path d="M12 12l10 5-10 5-10-5z" fill="#ddd" stroke="#444" /></Svg>
          </div>
        </div>
      </div>
      <div className="h-[2px] bg-[#373737] shrink-0" />

      {/* shelf */}
      <div className="h-[68px] flex shrink-0">
        <div className="w-[14px] pl-[4px] pt-[4px]"><Dots h={62} /></div>
        <div className="w-[20px] my-[2px] bg-[#383838] flex flex-col items-center justify-between py-[11px]">
          <svg width="11" height="6" className="block"><path d="M0 1h11M0 5h11" stroke="#b8b8b8" strokeWidth="2" /></svg>
          <Svg w={13} h={13}><circle cx="12" cy="12" r="7" fill="none" stroke="#bbb" strokeWidth="4" /><circle cx="12" cy="12" r="10" fill="none" stroke="#bbb" strokeWidth="2.500" strokeDasharray="3 3" /></Svg>
        </div>
        <div className="flex-1 flex flex-col min-w-0 pl-[2px]">
          <div className="h-[21px] bg-[#373737] flex items-end gap-[2px] pl-[2px] pt-[5px]">
            {shelfTabs.map(([t, w]) => (
              <div key={t} className={`${w} h-[16px] rounded-t-[3px] border border-b-0 border-[#2e2e2e] text-center leading-[15px] ${t === "Poly Modeling" ? "bg-[#444444] text-[#cfcfcf]" : "bg-[#3c3c3c] text-[#bbb]"}`}>{t}</div>
            ))}
          </div>
          <div className="flex-1 flex items-center pl-[5.600px]">
            {shelf.map((s, i) => (
              <div key={i} className="w-[34.840px] h-[44px] flex items-center justify-center shrink-0">
                {s ?? <div className="w-[2px] h-[35px] bg-[#868686]" />}
              </div>
            ))}
            <div className="ml-auto mr-[1px] w-[12px] h-[36px] bg-[#383838] flex flex-col items-center justify-between py-[3px]">
              <svg width="9" height="6"><path d="M0 6h9L4.500 0z" fill="#bbb" /></svg>
              <div className="w-[9px] h-[6px] rounded-full bg-[#777]" />
              <svg width="9" height="6"><path d="M0 0h9L4.500 6z" fill="#bbb" /></svg>
            </div>
          </div>
        </div>
      </div>
      <div className="h-[2px] bg-[#373737] shrink-0" />

      {/* main */}
      <div className="h-[733px] flex shrink-0">
        {/* tool box */}
        <div className="w-[46px] shrink-0 flex flex-col items-center pt-[2px] pb-[6px] border-r-2 border-[#3a3a3a]">
          <div className="h-[10px] flex items-start"><svg width="36" height="2"><line x1="0" x2="36" y1="1" y2="1" stroke="#777" strokeDasharray="1 2" /></svg></div>
          <div className="w-[36px] h-[36px] bg-[#5285a6] flex items-center justify-center">
            <svg width="20" height="30" viewBox="0 0 20 30"><path d="M2 1v22l5-5 5 10 4-2-5-9h7z" fill="#cfcfcf" stroke="#333" /></svg>
          </div>
          <div className="h-[38px] flex items-center"><Svg w={30} h={30}><ellipse cx="11" cy="12" rx="9" ry="7" transform="rotate(-25 11 12)" fill="none" stroke={T} strokeWidth="2.500" strokeDasharray="4 2" /><Cur x={11} y={8} s={1.100} /></Svg></div>
          <div className="h-[37px] flex items-center"><Svg w={30} h={30}><ellipse cx="10" cy="16" rx="9" ry="7" transform="rotate(25 10 16)" fill="none" stroke={T} strokeWidth="2.500" strokeDasharray="4 2" /><path d="M9 15l11-12 3 2-9 13z" fill={G} /><path d="M4 18c3 0 5-3 6-4l5 4c-2 2-6 3-11 0z" fill={G} /></Svg></div>
          <div className="h-[37px] flex items-center"><Svg w={30} h={30}><rect x="7" y="7" width="10" height="10" fill={G} /><path d="M12 .5l3 3H9zM12 23.500l3-3H9zM.5 12l3 3V9zM23.500 12l-3 3V9z" fill={T} /></Svg></div>
          <div className="h-[37px] flex items-center"><Svg w={31} h={31}><path d="M21 18a10 10 0 1 1-1-11" fill="none" stroke={T} strokeWidth="1.300" /><path d="M12 6l6 6-6 6-6-6z" fill={G} /><path d="M21 14l2 3-4 1z" fill={T} /></Svg></div>
          <div className="h-[36px] flex items-center"><Svg w={28} h={28}><rect x="2" y="1" width="21" height="21" fill="none" stroke={T} strokeWidth="1.100" strokeDasharray="2.500 1.500" /><rect x="1" y="13" width="10" height="10" fill={G} /><path d="M11 7h5v5" fill="none" stroke={T} strokeWidth="1.200" /></Svg></div>
          <div className="mt-[79px] w-[36px] h-[2px] bg-[#777]" />
          <div className="mt-[9px] w-[28px] h-[28px] bg-[#c4c4c4] p-[2px]"><div className="w-full h-full border-2 border-[#444] flex items-center justify-center"><Diam c="#333" /></div></div>
          <div className="mt-[8px] w-[28px] h-[28px] grid grid-cols-2 gap-[2px]">
            <div className="border border-[#c4c4c4] text-center leading-[10px] text-[12px]">+</div>
            <div className="bg-[#c4c4c4] flex items-center justify-center"><div className="w-[6px] h-[4px] bg-[#333] rotate-45" /></div>
            <div className="border border-[#c4c4c4] text-center leading-[10px] text-[12px]">+</div>
            <div className="border border-[#c4c4c4] text-center leading-[10px] text-[12px]">+</div>
          </div>
          <div className="mt-[9px] w-[28px] h-[28px] grid grid-cols-2 gap-[2px]">
            <div className="border border-[#c4c4c4] flex items-center justify-center text-[12px]">+</div>
            <div className="bg-[#c4c4c4] flex items-center justify-center"><div className="w-[6px] h-[4px] bg-[#333] rotate-45" /></div>
          </div>
          <div className="mt-[5px] w-[36px] h-[36px] bg-[#5285a6] p-[4px]">
            <div className="w-full h-full border-2 border-[#1c1c1c] flex items-center justify-center">
              <Svg w={24} h={24}><path d="M4 5h18M4 5v14M9 10h14M9 15h11M9 20h13M4 10h5M4 15h5M4 20h5" stroke="#ddd" strokeWidth="1.200" /><rect x="2" y="3" width="4" height="4" fill="#ddd" /><rect x="7" y="8" width="4" height="4" fill="#ddd" /><rect x="7" y="13" width="4" height="4" fill="#ddd" /><rect x="7" y="18" width="4" height="4" fill="#ddd" /></Svg>
            </div>
          </div>
          <div className="mt-[5px] w-[36px] h-[2px] bg-[#777]" />
          <div className="mt-[8px]"><Svg w={24} h={24}><circle cx="10" cy="10" r="8" fill="none" stroke={G} strokeWidth="1.800" /><path d="M16 16l7 7" stroke={G} strokeWidth="2.400" /></Svg></div>
          <div className="mt-auto w-[30px] h-[32px] relative">
            <svg width="30" height="32" viewBox="0 0 30 32" className="block">
              <path d="M4 0h26v32H4L0 26V6z" fill="#3fa7cd" />
              <rect x="3" y="22" width="27" height="10" fill="#2b6d8c" />
            </svg>
            <span className="absolute left-[8px] top-[0px] text-[17px] leading-[22px] font-bold text-white font-['Liberation_Sans',sans-serif]">M</span>
            <span className="absolute left-[8px] top-[22px] text-[8px] leading-[10px] font-bold text-[#ddd] font-['Liberation_Sans',sans-serif]">AYA</span>
          </div>
        </div>

        {/* outliner */}
        <div className="w-[267px] shrink-0 flex flex-col border-r border-[#3a3a3a]">
          <div className="h-[18px] w-[72px] ml-[2px] bg-[#444444] border border-b-0 border-[#383838] rounded-t-sm pl-[12px] leading-[17px] text-[#bbb]">Outliner</div>
          <div className="flex-1 flex flex-col pl-[4px] pr-[6px] min-h-0 border-t border-[#3b3b3b]">
            <div className="h-[24px] flex items-center gap-[15px] pl-[7px] text-[#c4c4c4] mb-[3px]">
              <span>Display</span><span>Show</span><span>Help</span>
            </div>
            <div className="h-[19px] flex items-center">
              <div className="w-[27px] flex justify-center"><Svg w={16} h={16}><path d="M6 2H2v4M18 2h4v4M2 18v4h4M22 18v4h-4M4 9v6l4-3zM20 9v6l-4-3z" fill="#5a5a5a" stroke="#666" strokeWidth="1.500" /></Svg></div>
              <div className="flex-1 h-[19px] bg-[#2b2b2b] rounded-sm flex items-center justify-between pl-[3px] pr-[4px] text-[#777]"><span>Search...</span><TriDown c="#ccc" /></div>
            </div>
            <div className="mt-[2px] h-[656px] bg-[#373737] flex flex-col">
              <div className="flex-1 flex min-h-0">
                <div className="flex-1 min-w-0">
                  {["persp","top","front","side"].map((c) => (
                    <div key={c} className="h-[20px] flex items-center pl-[36px] text-[#6f6f6f]">
                      <svg width="14" height="10" viewBox="0 0 14 10" className="block shrink-0"><rect y="1" width="9" height="8" fill={G} /><path d="M10 4l4-3v8l-4-3z" fill={G} /></svg>
                      <span className="ml-[4px]">{c}</span>
                    </div>
                  ))}
                  {outlinerNames.map((c) => (
                    <div key={c} className="h-[20px] flex items-center pl-[35px] text-[#c4c4c4]">
                      <Diam /><span className="ml-[3px]">{c}</span>
                    </div>
                  ))}
                  {["defaultLightSet","defaultObjectSet"].map((c) => (
                    <div key={c} className="h-[20px] flex items-center pl-[35px] text-[#c4c4c4]">
                      <Svg w={16} h={16}><circle cx="12" cy="12" r="10.500" fill="#333" stroke="#bbb" strokeWidth="1.500" /><path d="M11 6h7v11h-5v-5h-2z" fill={T} /><circle cx="9" cy="15" r="3.500" fill="#ccc" /></Svg>
                      <span className="ml-[4px]">{c}</span>
                    </div>
                  ))}
                </div>
                <div className="w-[10px] flex flex-col items-center">
                  <svg width="10" height="13" className="shrink-0"><path d="M0 10h10L5 5z" fill="#ccc" /></svg>
                  <div className="flex-1 w-[10px] bg-[#5a5a5a] rounded-[4px]" />
                  <svg width="10" height="13" className="shrink-0"><path d="M0 4h10L5 9z" fill="#ccc" /></svg>
                </div>
              </div>
              <div className="h-[12px] flex items-center">
                <svg width="13" height="10" className="shrink-0"><path d="M9 0v10L4 5z" fill="#ccc" /></svg>
                <div className="w-[218px] h-[10px] rounded-[4px] bg-[#5a5a5a]" />
                <svg width="13" height="10" className="shrink-0"><path d="M3 0v10l5-5z" fill="#ccc" /></svg>
              </div>
            </div>
            <div className="h-[8px] flex items-center justify-center"><svg width="86" height="1"><line x1="0" x2="86" y1=".5" y2=".5" stroke="#777" strokeDasharray="1 2" /></svg></div>
          </div>
        </div>

        {/* viewport */}
        <div className="w-[1320px] ml-[2px] mt-[3px] mb-[2px] shrink-0 border border-[#808080] flex flex-col">
          <div className="h-[20px] shrink-0 flex items-center gap-[16px] pl-[8px] text-[#c4c4c4]">
            {["View","Shading","Lighting","Show","Renderer","Panels"].map((m) => <span key={m}>{m}</span>)}
          </div>
          <div className="h-[21px] shrink-0 flex items-center text-[#ccc]">
            <Slot w="w-[9.500px]"><Bar /></Slot>
            {vbA.map((s, i) => <Step19 key={i}>{s}</Step19>)}
            <Slot w="w-[12px]"><Bar /></Slot>
            {vbB.map((s, i) => <Step19 key={i}>{s}</Step19>)}
            <Slot w="w-[12px]"><Bar /></Slot>
            {vbC.map((s, i) => <Vi key={i} active={i === 0}>{s}</Vi>)}
            <Slot w="w-[13px]"><Bar /></Slot>
            {vbD.map((s, i) => <Vi key={i} active={i === 1 || i === 3 || i === 4}>{s}</Vi>)}
            <Slot w="w-[13px]"><Bar /></Slot>
            {vbE.map((s, i) => <Vi key={i}>{s}</Vi>)}
            <Slot w="w-[12px]"><Bar /></Slot>
            <Step19>{vbF}</Step19>
            <Slot w="w-[11px]"><Bar /></Slot>
            {vbG.map((s, i) => <Step19 key={i}>{s}</Step19>)}
            <Slot w="w-[11px]"><Bar /></Slot>
            <Step19>{v(<><circle cx="12" cy="12" r="10" fill={G} /><circle cx="12" cy="12" r="4" fill="#444" /><path d="M12 2v6M3 8l6 3M3 17l6-3M12 22v-6M21 8l-6 3M21 17l-6-3" stroke="#444" strokeWidth="1.500" /></>)}</Step19>
            <div className="ml-[3px] w-[38px] h-[18px] bg-[#2b2b2b] rounded-sm text-center leading-[18px] text-[12px]">0.00</div>
            <div className="w-[22px] h-full flex items-center justify-center">{v(<><path d="M8 3a9 9 0 0 0 0 18z" fill={G} /><path d="M13 3a9 9 0 0 1 0 18" fill="none" stroke={G} strokeWidth="2" /></>)}</div>
            <div className="w-[38px] h-[18px] bg-[#2b2b2b] rounded-sm text-center leading-[18px] text-[12px]">1.00</div>
            <div className="ml-[3px] w-[18px] h-[19px] bg-[#5285a6] flex items-center justify-center">
              <div className="w-[15px] h-[15px] rounded-full bg-[#3a98a8] border border-[#333] text-[7px] leading-[13px] font-bold text-center text-[#222]">ON</div>
            </div>
            <div className="ml-[3px] w-[177px] h-[19px] bg-[#555555] rounded-l-sm pl-[4px] leading-[19px] text-[12px] text-[#c4c4c4]">ACES 1.0 SDR-video (sRGB)</div>
            <div className="ml-[1px] w-[19px] h-[19px] bg-[#606060] rounded-r-sm flex items-center justify-center"><TriDown /></div>
          </div>
          <div className="flex-1 relative bg-[#5c5c5c] min-h-0"><Scene /></div>
        </div>

        {/* channel box */}
        <div className="w-[263px] ml-[4px] shrink-0 flex flex-col">
          <div className="h-[20px] flex items-center justify-end pr-[3px] gap-[3px] shrink-0">
            <Svg w={18} h={18}><path d="M12 2l4 6H8z" fill="#5fa84a" /><rect x="11" y="8" width="2" height="6" fill="#ccc" /><path d="M2 22l4-7 4 7z" fill="#3a7ad8" /><path d="M14 22l4-7 4 7z" fill="#d43c3c" /></Svg>
            <Svg w={18} h={18}><path d="M2 21a10 10 0 1 1 20 0h-6a4 4 0 1 0-8 0z" fill={T} /><path d="M16 21h6c0-3-1-6-3-7l-4 4z" fill="#777" /></Svg>
            <Svg w={18} h={18}><path d="M3 2v20h20" fill="none" stroke="#888" /><path d="M6 19 20 5" stroke={T} strokeWidth="2.500" /><path d="M14 2h8v8z" fill={T} /></Svg>
          </div>
          <div className="h-[28px] flex items-center gap-[15.500px] pl-[12px] text-[#c4c4c4] shrink-0">
            <span>Channels</span><span>Edit</span><span>Object</span><span>Show</span>
          </div>
          <div className="flex-1 flex items-center justify-center text-center text-[10.500px] font-semibold leading-[15px] text-[#c8c8c8]">
            <div>Select objects in the scene to view,<br />edit and set keyframes on channels<br />(attributes)</div>
          </div>
          <div className="h-[10px] flex items-center justify-center shrink-0"><svg width="86" height="1"><line x1="0" x2="86" y1=".5" y2=".5" stroke="#777" strokeDasharray="1 2" /></svg></div>
          <div className="mt-[4px] mb-[5px] mx-[5px] h-[202px] flex flex-col shrink-0 border border-[#333]">
            <div className="h-[18px] bg-[#373737] flex items-end gap-[2px] pl-[1px] shrink-0">
              <div className="w-[64px] h-[17px] bg-[#444444] rounded-t-sm text-center leading-[16px] text-[#c4c4c4]">Display</div>
              <div className="w-[53px] h-[17px] bg-[#3c3c3c] border border-b-0 border-[#2e2e2e] rounded-t-sm text-center leading-[15px] text-[#bbb]">Anim</div>
            </div>
            <div className="h-[24px] flex items-center gap-[15px] pl-[9px] text-[#c4c4c4] shrink-0">
              <span>Layers</span><span>Options</span><span>Help</span>
            </div>
            <div className="h-[25px] flex items-center justify-end pr-[7px] shrink-0">
              {[0, 1, 2, 3].map((k) => (
                <div key={k} className="w-[24.500px] flex justify-center">
                  <svg width="15" height="11" viewBox="0 0 15 11" className="block">
                    <path d="M0 7l6-4 5 4-5 4z" fill={G} />
                    {k === 0 && <path d="M11 1l3 4h-2v5h-2V5H8z" fill={T} />}
                    {k === 1 && <path d="M11 10l3-4h-2V2h-2v4H8z" fill={T} />}
                    {k === 2 && <path d="M10 0h2v3h3v2h-3v3h-2V5H7V3h3z" fill={T} />}
                    {k === 3 && <circle cx="11" cy="3.500" r="3.500" fill={T} />}
                  </svg>
                </div>
              ))}
            </div>
            <div className="mx-[2px] h-[120px] bg-[#2b2b2b] shrink-0" />
            <div className="h-[12px] mx-[2px] bg-[#373737] flex items-center shrink-0">
              <svg width="14" height="10" className="shrink-0"><path d="M10 0v10L5 5z" fill="#ccc" /></svg>
              <div className="w-[154px] h-[10px] rounded-[4px] bg-[#5a5a5a]" />
              <svg width="10" height="10" className="ml-auto mr-[4px] shrink-0"><path d="M2 0v10l5-5z" fill="#ccc" /></svg>
            </div>
          </div>
        </div>

        {/* side tabs */}
        <div className="w-[16px] shrink-0 flex flex-col text-[#bbb]">
          <div className="h-[163px] pt-[14px] [writing-mode:vertical-rl] leading-[16px]">Channel Box / Layer Editor</div>
          <div className="mt-[2px] h-[108px] bg-[#383838] pt-[14px] [writing-mode:vertical-rl] leading-[16px]">Attribute Editor</div>
          <div className="mt-[2px] h-[110px] bg-[#383838] pt-[14px] [writing-mode:vertical-rl] leading-[16px]">Modeling Toolkit</div>
        </div>
      </div>
      <div className="h-[2px] bg-[#373737] shrink-0" />

      {/* time slider */}
      <div className="h-[48px] flex shrink-0">
        <div className="w-[16px] pl-[4px] pt-[4px]"><Dots h={42} /></div>
        <div className="w-[1613px] flex overflow-hidden shrink-0">
          <div className="w-[61.500px] shrink-0 flex flex-col">
            <div className="h-[8px]"><div className="ml-[8px] w-[13px] h-full bg-[#5a5a5a]" /></div>
            <div className="h-[32px] bg-[#2b2b2b] pt-[14px] pl-[15px] text-[11px] leading-[14px] text-white"><span className="bg-[#1f1f1f] px-[2px]">1</span></div>
            <div className="h-[8px] border-t-2 border-t-[#5a5a5a]"><div className="ml-[8px] w-[13px] h-full bg-[#5a5a5a]" /></div>
          </div>
          {labels.map((n) => <Cell key={n} n={n} />)}
        </div>
        <div className="ml-[9px] mt-[14px] w-[50px] h-[19px] bg-[#2b2b2b] rounded-sm pl-[6px] leading-[19px] text-[#ccc]">1</div>
        <div className="ml-[4px] mt-[14px] h-[19px] flex items-center">
          <Play><path d="M3 4v16M8 12l6-8v16zM15 12l6-8v16z" fill={G} stroke={G} strokeWidth="1" /></Play>
          <Play><path d="M5 4v16M8 12l9-8v16z" fill={G} stroke={G} strokeWidth="1.500" /></Play>
          <Play><path d="M5 2v20" stroke="#e08a3c" strokeWidth="2.500" strokeDasharray="3 1" /><path d="M8 12l10-8v16z" fill={G} /></Play>
          <Play><path d="M5 12 19 2v20z" fill={G} /></Play>
          <Play><path d="M19 12 5 2v20z" fill={G} /></Play>
          <Play><path d="M19 2v20" stroke="#e08a3c" strokeWidth="2.500" strokeDasharray="3 1" /><path d="M16 12 6 4v16z" fill={G} /></Play>
          <Play><path d="M19 4v16M16 12 7 4v16z" fill={G} stroke={G} strokeWidth="1.500" /></Play>
          <Play><path d="M21 4v16M16 12l-6-8v16zM9 12 3 4v16z" fill={G} stroke={G} strokeWidth="1" /></Play>
        </div>
      </div>
      <div className="h-[2px] bg-[#373737] shrink-0" />

      {/* range slider */}
      <div className="h-[36px] flex items-center shrink-0">
        <div className="w-[17px] pl-[4px]"><Dots h={28} /></div>
        <div className="w-[50px] h-[20px] bg-[#2b2b2b] rounded-sm pl-[6px] leading-[20px]">1</div>
        <div className="ml-[9px] w-[1089px] h-[20px] bg-[#2b2b2b] rounded-[3px] p-[2px]">
          <div className="w-full h-full bg-[#444444] flex items-center">
            <div className="w-[8px] h-full bg-[#9a9a9a] shrink-0" />
            <span className="ml-[9px] w-[6px] shrink-0">1</span>
            <div className="ml-[307px] shrink-0"><Dots h={12} /></div>
            <span className="ml-[294px] w-[24px] shrink-0">120</span>
            <div className="w-[8px] h-full bg-[#9a9a9a] shrink-0" />
          </div>
        </div>
        <div className="ml-[9px] w-[51px] h-[20px] bg-[#2b2b2b] rounded-sm pl-[6px] leading-[20px]">200</div>
        <Slot w="w-[42px]"><Bar /></Slot>
        <Slot w="w-[24px]"><Svg w={20} h={22}><path d="M5 3h10v20l-5-4-5 4z" fill="#e0703c" /><path d="M15 1v10M10 6h10" stroke="#eee" strokeWidth="2.500" /></Svg></Slot>
        <Slot w="w-[38px]"><Bar /></Slot>
        <Slot w="w-[22px]"><TriOut /></Slot>
        <div className="ml-[1px] w-[102px] h-[20px] border border-[#555] rounded-sm pl-[5px] leading-[18px] text-[#c4c4c4]">No Character Set</div>
        <Slot w="w-[30px]"><TriOut /></Slot>
        <div className="w-[102px] h-[20px] border border-[#555] rounded-sm pl-[5px] leading-[18px] text-[#c4c4c4]">No Anim Layer</div>
        <Slot w="w-[42px]"><Bar /></Slot>
        <div className="ml-[3px] w-[95px] h-[20px] flex">
          <div className="flex-1 bg-[#5a5a5a] rounded-l-sm pl-[3px] leading-[20px] text-[#c4c4c4]">24 fps</div>
          <div className="ml-[1px] w-[19px] bg-[#606060] rounded-r-sm flex items-center justify-center"><TriDown /></div>
        </div>
        <Slot w="w-[44px]"><Svg w={18} h={18}><path d="M3 13V9c0-2 1-3 3-3h12M21 11v4c0 2-1 3-3 3H6" fill="none" stroke={G} strokeWidth="2.200" /><path d="M16 2l5 4-5 4zM8 14l-5 4 5 4z" fill={G} /></Svg></Slot>
        <div className="w-[23px] h-[23px] bg-[#5285a6] flex items-center justify-center">
          <Svg w={19} h={19}><rect x="2" y="5" width="18" height="16" fill="#333" stroke="#e09a4f" /><rect x="4" y="13" width="6" height="6" fill="#e09a4f" /><rect x="12" y="13" width="6" height="6" fill="#e09a4f" /><path d="M2 9h18" stroke="#e09a4f" strokeDasharray="2 1" strokeWidth="2" /><path d="M17 1l6 6-6 6z" fill="#ddd" /></Svg>
        </div>
        <Slot w="w-[40px]"><Bar /></Slot>
        <Slot w="w-[24px]"><Svg w={18} h={18}><path d="M2 9h5l6-6v18l-6-6H2z" fill={G} /><path d="M16 8a6 6 0 0 1 0 8M19 5a10 10 0 0 1 0 14" fill="none" stroke={G} strokeWidth="1.400" /></Svg></Slot>
        <Slot w="w-[32px]"><Svg w={18} h={18}><circle cx="12" cy="12" r="9" fill="none" stroke="#999" strokeWidth="1.500" strokeDasharray="5 2" /><path d="M12 7v10M7 12h10" stroke="#e08a3c" strokeWidth="1.600" /></Svg></Slot>
        <Slot w="w-[26px]"><Svg w={18} h={18}><circle cx="6" cy="6" r="4" fill="none" stroke={G} strokeWidth="1.400" strokeDasharray="2 1" /><circle cx="15" cy="8" r="2.500" fill="#e08a3c" /><path d="M15 10l-3 6-5 2M13 14l5 2 2 6M12 11l6-1" fill="none" stroke="#e08a3c" strokeWidth="2.200" /></Svg></Slot>
      </div>
      <div className="h-[2px] bg-[#373737] shrink-0" />

      {/* help + command */}
      <div className="h-[30px] pt-[6px] pb-[2px] flex items-center shrink-0">
        <div className="w-[16px] pl-[4px]"><Dots h={20} /></div>
        <Svg w={16} h={17} vb="0 0 16 17"><ellipse cx="8" cy="8.500" rx="8" ry="8.500" fill="#79a63b" /><text x="8" y="13" fontSize="12" fontWeight="700" textAnchor="middle" fill="#222" fontFamily="Liberation Sans, sans-serif">?</text></Svg>
        <div className="ml-[8px] w-[954px] text-[10px] text-[#d0d0d0]">Select Tool: select an object</div>
        <div className="w-[29px] text-[#ccc]">MEL</div>
        <div className="w-[335px] h-[20px] bg-[#2b2b2b] rounded-sm" />
        <div className="w-[5px] flex justify-center"><svg width="1" height="12"><line x1=".5" x2=".5" y1="0" y2="12" stroke="#888" strokeDasharray="1 2" /></svg></div>
        <div className="w-[519px] h-[20px] bg-[#2b2b2b] rounded-sm pl-[5px] leading-[20px] text-[#d0d0d0]">AbcImport v1.0 using Alembic 1.8.5 (built Feb 16 2024 12:18:59)</div>
        <div className="ml-[10px] w-[19px] h-[19px] border border-[#999] flex flex-col">
          <div className="h-[4px] bg-[#aaa]" />
          <div className="flex-1 text-[9px] leading-[13px] text-center text-[#ddd] font-['Liberation_Mono',monospace]">{"{;}"}</div>
        </div>
      </div>
    </div>
  );
}
